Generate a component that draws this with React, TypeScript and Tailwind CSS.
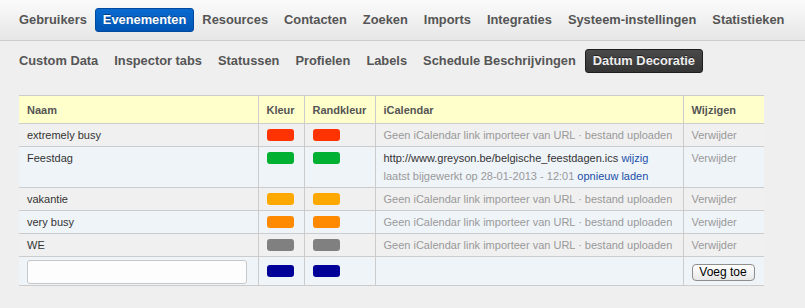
import React from "react";

const topNav = ["Gebruikers", "Evenementen", "Resources", "Contacten", "Zoeken", "Imports", "Integraties", "Systeem-instellingen", "Statistieken"];
const subNav = ["Custom Data", "Inspector tabs", "Statussen", "Profielen", "Labels", "Schedule Beschrijvingen", "Datum Decoratie"];

type Row = { name: string; color: string; feest?: boolean };
const rows: Row[] = [
  { name: "extremely busy", color: "#ff3300" },
  { name: "Feestdag", color: "#00b032", feest: true },
  { name: "vakantie", color: "#ffa800" },
  { name: "very busy", color: "#ff8a00" },
  { name: "WE", color: "#808080" },
];

function Swatch({ color }: { color: string }) {
  return <div className="h-[12px] w-[27px] rounded-[3px]" style={{ backgroundColor: color }} />;
}

export default function App() {
  return (
    <div className="min-h-[308px] w-[805px] bg-[#efefef] font-['Liberation_Sans',Arial,sans-serif]">
      <div className="flex h-[41px] items-center border-b border-[#cdcdcd] bg-gradient-to-b from-[#fbfbfb] to-[#e6e6e6] pl-[11px]">
        {topNav.map((t) =>
          t === "Evenementen" ? (
            <div
              key={t}
              className="flex h-[24px] items-center rounded-[3px] border border-[#004a9e] bg-gradient-to-b from-[#0a6ad0] to-[#0055b5] px-[7px] text-[12.85px] font-bold text-white [text-shadow:0_-1px_0_rgba(0,0,0,0.35)]"
            >
              {t}
            </div>
          ) : (
            <div key={t} className="flex h-[24px] items-center px-[8px] text-[12.85px] font-bold text-[#555]">
              {t}
            </div>
          )
        )}
      </div>
      <div className="flex h-[40px] items-center pl-[11px]">
        {subNav.map((t) =>
          t === "Datum Decoratie" ? (
            <div
              key={t}
              className="ml-[1px] flex h-[24px] items-center rounded-[3px] border border-[#1e1e1e] bg-gradient-to-b from-[#4a4a4a] to-[#353535] px-[7px] text-[12.85px] font-bold text-[#eeeeee] [text-shadow:0_-1px_0_rgba(0,0,0,0.5)]"
            >
              {t}
            </div>
          ) : (
            <div key={t} className="flex h-[24px] items-center px-[8px] text-[12.85px] font-bold text-[#555]">
              {t}
            </div>
          )
        )}
      </div>
      <div className="ml-[19px] mt-[14px] w-[745px]">
        <table className="w-[745px] table-fixed border-collapse text-[11px] leading-[18px] text-[#333]">
          <colgroup>
            <col className="w-[239px]" />
            <col className="w-[46px]" />
            <col className="w-[71px]" />
            <col className="w-[308px]" />
            <col className="w-[81px]" />
          </colgroup>
          <thead>
            <tr className="h-[28px] border-y border-[#cccccc] bg-[#ffffcc] text-left">
              <th className="px-[8px] font-bold text-[#555]">Naam</th>
              <th className="border-l border-[#cccccc] px-[8px] font-bold text-[#555]">Kleur</th>
              <th className="border-l border-[#cccccc] px-[8px] font-bold text-[#555]">Randkleur</th>
              <th className="border-l border-[#cccccc] px-[8px] font-bold text-[#555]">iCalendar</th>
              <th className="border-l border-[#cccccc] px-[8px] font-bold text-[#555]">Wijzigen</th>
            </tr>
          </thead>
          <tbody>
            {rows.map((r, i) => (
              <tr key={r.name} className={`border-b border-[#cccccc] align-top ${i % 2 === 1 ? "bg-[#eff4f9]" : "bg-[#f0f0f0]"}`}>
                <td className="px-[8px] py-[2px]">{r.name}</td>
                <td className="border-l border-[#cccccc] px-[8px] pt-[5px]">
                  <Swatch color={r.color} />
                </td>
                <td className="border-l border-[#cccccc] px-[8px] pt-[5px]">
                  <Swatch color={r.color} />
                </td>
                <td className="whitespace-nowrap border-l border-[#cccccc] px-[8px] py-[2px]">
                  {r.feest ? (
                    <>
                      <div>
                        http://www.greyson.be/belgische_feestdagen.ics <span className="text-[#1a4fa8]">wijzig</span>
                      </div>
                      <div className="text-[#999]">
                        laatst bijgewerkt op 28-01-2013 - 12:01 <span className="text-[#1a4fa8]">opnieuw laden</span>
                      </div>
                    </>
                  ) : (
                    <span className="text-[#999]">Geen iCalendar link importeer van URL · bestand uploaden</span>
                  )}
                </td>
                <td className="border-l border-[#cccccc] px-[8px] py-[2px] text-[#999]">Verwijder</td>
              </tr>
            ))}
            <tr className="h-[29px] border-b border-[#cccccc] bg-[#eff4f9] align-middle">
              <td className="px-[8px] pt-[2px]">
                <input className="block h-[24px] w-[220px] rounded-[3px] border border-[#c8c8c8] bg-[#fdfdfd] outline-none" />
              </td>
              <td className="border-l border-[#cccccc] px-[8px]">
                <Swatch color="#000099" />
              </td>
              <td className="border-l border-[#cccccc] px-[8px]">
                <Swatch color="#000099" />
              </td>
              <td className="border-l border-[#cccccc] px-[8px]"></td>
              <td className="border-l border-[#cccccc] px-[8px] pt-[2px]">
                <button className="flex h-[17px] w-[63px] items-center justify-center rounded-[4px] border border-[#8e8e8e] bg-gradient-to-b from-white to-[#e8e8e8] text-[12px] leading-none text-black">
                  Voeg toe
                </button>
              </td>
            </tr>
          </tbody>
        </table>
      </div>
    </div>
  );
}
